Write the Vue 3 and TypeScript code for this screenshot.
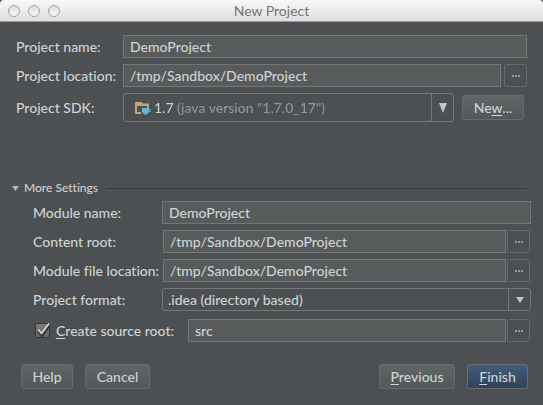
<script setup lang="ts">
import { ref } from 'vue'

const projectName = ref('DemoProject')
const projectLocation = ref('/tmp/Sandbox/DemoProject')
const sdk = ref('1.7')
const expanded = ref(true)
const moduleName = ref('DemoProject')
const contentRoot = ref('/tmp/Sandbox/DemoProject')
const moduleFile = ref('/tmp/Sandbox/DemoProject')
const format = ref('idea')
const createSource = ref(true)
const sourceRoot = ref('src')
</script>

<template>
  <div class="window">
    <header class="titlebar">
      <div class="lights">
        <button class="light" type="button" aria-label="Close"></button>
        <button class="light" type="button" aria-label="Minimize"></button>
        <button class="light" type="button" aria-label="Zoom"></button>
      </div>
      <h1 class="title">New Project</h1>
    </header>

    <form class="content" @submit.prevent>
      <section class="main-fields">
        <div class="row">
          <label class="label" for="name">Project name:</label>
          <input id="name" v-model="projectName" class="field" type="text" />
        </div>
        <div class="row">
          <label class="label" for="location">Project location:</label>
          <input id="location" v-model="projectLocation" class="field" type="text" />
          <button class="browse apart" type="button" aria-label="Browse project location">
            <i class="dot"></i><i class="dot"></i><i class="dot"></i>
          </button>
        </div>
        <div class="row">
          <label class="label" for="sdk">Project SDK:</label>
          <div class="combo tall">
            <svg class="folder" viewBox="0 0 16 14" aria-hidden="true">
              <path fill="#c9a26d" fill-rule="evenodd" d="M0 1h6.500l1.500 1.500h6V13H0zM2 5v6h10V5z" />
              <path fill="#4c5052" d="M6 7h10v7H7l-1-2z" />
              <path fill="#c9a26d" d="M12 4h2v3h-2z" />
              <path fill="#68b4dc" d="M7 7h7v1h1.500v3H14l-2 2.500H9.500L7 11z" />
              <path fill="#4c5052" d="M14 9h.8v1H14z" />
            </svg>
            <select id="sdk" v-model="sdk" class="select two-tone">
              <option value="1.7">1.7 (java version "1.7.0_17")</option>
            </select>
            <span class="arrow">
              <svg class="arrow-long" viewBox="0 0 8 10" aria-hidden="true"><path d="M0 0h8L4 10z" fill="#c5c5c5" /></svg>
            </span>
          </div>
          <button class="btn new" type="button">Ne<u>w</u>...</button>
        </div>
      </section>

      <div class="divider">
        <button class="toggle" type="button" :aria-expanded="expanded" @click="expanded = !expanded">
          <svg class="caret" viewBox="0 0 7 5" aria-hidden="true"><path d="M0 0h7L3.5 5z" fill="#b5b7b8" /></svg>
          More Settings
        </button>
        <span class="line"></span>
      </div>

      <section v-show="expanded" class="more-fields">
        <div class="row">
          <label class="label" for="module">Module name:</label>
          <input id="module" v-model="moduleName" class="field" type="text" />
        </div>
        <div class="row inset">
          <label class="label" for="root">Content root:</label>
          <input id="root" v-model="contentRoot" class="field" type="text" />
          <button class="browse" type="button" aria-label="Browse content root">
            <i class="dot"></i><i class="dot"></i><i class="dot"></i>
          </button>
        </div>
        <div class="row inset">
          <label class="label" for="file">Module file location:</label>
          <input id="file" v-model="moduleFile" class="field" type="text" />
          <button class="browse" type="button" aria-label="Browse module file location">
            <i class="dot"></i><i class="dot"></i><i class="dot"></i>
          </button>
        </div>
        <div class="row">
          <label class="label" for="format">Project format:</label>
          <div class="combo">
            <select id="format" v-model="format" class="select">
              <option value="idea">.idea (directory based)</option>
            </select>
            <span class="arrow">
              <svg class="arrow-short" viewBox="0 0 8 6" aria-hidden="true"><path d="M0 0h8L4 6z" fill="#c5c5c5" /></svg>
            </span>
          </div>
        </div>
        <div class="row inset source">
          <label class="check-label">
            <span class="check">
              <input v-model="createSource" class="checkbox" type="checkbox" />
              <svg v-if="createSource" class="tick" viewBox="0 0 16 16" aria-hidden="true">
                <path d="M3.500 8.500l4 4.500L15.500 2" fill="none" stroke="#303234" stroke-width="3" />
                <path d="M3.500 7l3.500 4L15 0.500" fill="none" stroke="#d4d4d4" stroke-width="2" />
              </svg>
            </span>
            <span><u>C</u>reate source root:</span>
          </label>
          <input v-model="sourceRoot" class="field" type="text" aria-label="Source root" />
          <button class="browse" type="button" aria-label="Browse source root">
            <i class="dot"></i><i class="dot"></i><i class="dot"></i>
          </button>
        </div>
      </section>

      <footer class="actions">
        <button class="btn help" type="button">Help</button>
        <button class="btn cancel" type="button">Cancel</button>
        <span class="spacer"></span>
        <button class="btn previous" type="button"><u>P</u>revious</button>
        <button class="btn primary" type="submit"><u>F</u>inish</button>
      </footer>
    </form>
  </div>
</template>

<style>
body {
  background: #4c5052;
}
</style>

<style scoped>
* {
  box-sizing: border-box;
}

.window {
  color: #d0d2d3;
  font: 500 14px/16px Lato, "Noto Sans", sans-serif;
  font-variant-ligatures: none;
}

button,
input,
select {
  margin: 0;
  color: inherit;
  font: inherit;
  font-variant-ligatures: none;
}

u {
  text-decoration-thickness: 1px;
  text-underline-offset: 2px;
}

.titlebar {
  display: grid;
  grid-template-columns: 1fr auto 1fr;
  align-items: center;
  height: 22px;
  padding: 0 8px;
  border-bottom: 1px solid #989a9b;
  border-radius: 4px 4px 0 0;
  background: linear-gradient(#f8f8f8, #dedede);
}

.lights {
  display: flex;
  gap: 8px;
}

.light {
  width: 12px;
  height: 12px;
  padding: 0;
  border: 1px solid #a2a2a2;
  border-radius: 50%;
  background: linear-gradient(#dcdcdc, #f8f8f8);
}

.title {
  margin: 0;
  color: #747474;
  font-size: 14px;
  font-weight: 400;
}

.content {
  padding: 13px 12px 16px;
}

.main-fields,
.more-fields {
  display: flex;
  flex-direction: column;
  gap: 6px;
}

.main-fields {
  padding: 0 4px;
}

.more-fields {
  padding-left: 21px;
}

.row {
  display: flex;
  align-items: center;
}

.label {
  flex: none;
  width: 107px;
  white-space: nowrap;
}

.more-fields .label {
  width: 129px;
}

.more-fields .inset .label {
  width: 130px;
}

.inset {
  padding-right: 1px;
}

.field {
  flex: 1;
  min-width: 0;
  height: 23px;
  padding: 0 6px;
  border: 1px solid #757777;
  border-radius: 0;
  outline: none;
  background: #575b5c;
}

.browse {
  display: flex;
  flex: none;
  align-items: center;
  justify-content: center;
  gap: 1px;
  width: 23px;
  height: 23px;
  margin-left: 1px;
  padding: 0;
  border: 1px solid #66696a;
  border-radius: 2px;
  background: transparent;
}

.browse.apart {
  margin-left: 3px;
}

.dot {
  width: 2px;
  height: 2px;
  background: #959798;
}

.combo {
  display: flex;
  flex: 1;
  align-items: center;
  min-width: 0;
  height: 23px;
  border: 1px solid #757777;
  border-radius: 3px;
}

.tall {
  height: 29px;
}

.select {
  flex: 1;
  min-width: 0;
  height: 21px;
  padding: 0 5px;
  border: 0;
  outline: none;
  appearance: none;
  background: transparent;
}

.two-tone {
  padding-left: 3px;
  background: linear-gradient(to right, #d0d2d3 25px, #949697 25px);
  background-clip: text;
  color: transparent;
}

.select option {
  background: #4c5052;
  color: #d0d2d3;
}

.folder {
  width: 16px;
  height: 14px;
  margin-left: 11px;
}

.arrow {
  display: flex;
  align-items: center;
  align-self: stretch;
  justify-content: center;
  width: 22px;
  border-left: 1px solid #757777;
  pointer-events: none;
}

.arrow-long {
  width: 8px;
  height: 10px;
}

.arrow-short {
  width: 8px;
  height: 6px;
}

.btn {
  height: 25px;
  padding: 0;
  border: 1px solid #686c6d;
  border-radius: 3px;
  background: linear-gradient(#606667, #525758);
}

.new {
  width: 62px;
  margin: 0 3px 0 8px;
}

.divider {
  display: flex;
  align-items: center;
  gap: 8px;
  padding: 58px 4px 5px 0;
}

.toggle {
  display: flex;
  align-items: center;
  gap: 5px;
  padding: 0;
  border: 0;
  background: transparent;
  font-size: 12px;
}

.caret {
  width: 7px;
  height: 5px;
}

.line {
  flex: 1;
  height: 1px;
  background: #393b3c;
}

.source {
  padding-top: 2px;
}

.check-label {
  display: flex;
  flex: none;
  align-items: center;
  gap: 6px;
  width: 155px;
  padding-left: 2px;
  white-space: nowrap;
}

.check {
  display: grid;
  width: 15px;
  height: 15px;
}

.checkbox,
.tick {
  grid-area: 1 / 1;
  width: 15px;
  height: 15px;
}

.checkbox {
  appearance: none;
  border: 1px solid #35383a;
  border-radius: 2px;
  background: linear-gradient(#7c7c7c, #626262);
}

.tick {
  overflow: visible;
  pointer-events: none;
}

.actions {
  display: flex;
  padding: 22px 3px 0 9px;
}

.help {
  width: 52px;
}

.cancel {
  width: 65px;
  margin-left: 12px;
}

.spacer {
  flex: 1;
}

.previous {
  width: 76px;
}

.primary {
  width: 61px;
  margin-left: 12px;
  background: linear-gradient(#425d7c, #304258);
}
</style>
